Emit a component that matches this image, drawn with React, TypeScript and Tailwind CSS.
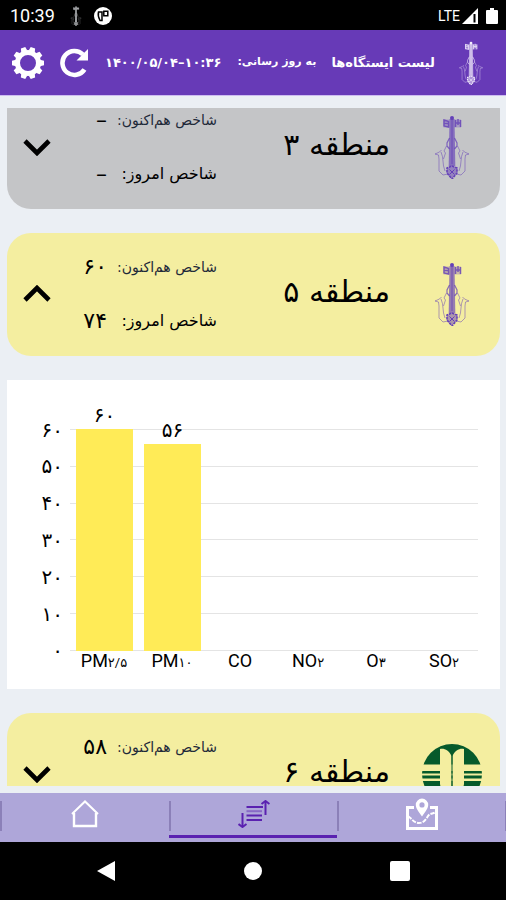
import React, { useState } from "react";
import clsx from "clsx";

type Station = {
  name: string;
  now: string;
  today?: string;
  tone: "none" | "moderate";
  logo: "tehran" | "doe";
};

const stations: Station[] = [
  { name: "منطقه ۳", now: "–", today: "–", tone: "none", logo: "tehran" },
  { name: "منطقه ۵", now: "۶۰", today: "۷۴", tone: "moderate", logo: "tehran" },
  { name: "منطقه ۶", now: "۵۸", tone: "moderate", logo: "doe" },
];

const pollutants = [
  { label: "PM", sub: "۲/۵", value: 60, text: "۶۰" },
  { label: "PM", sub: "۱۰", value: 56, text: "۵۶" },
  { label: "CO", sub: "", value: 0, text: "" },
  { label: "NO", sub: "۲", value: 0, text: "" },
  { label: "O", sub: "۳", value: 0, text: "" },
  { label: "SO", sub: "۲", value: 0, text: "" },
];

const ticks = ["۶۰", "۵۰", "۴۰", "۳۰", "۲۰", "۱۰", "۰"];
const maxValue = 60;

const TehranLogo = ({ className }: { className?: string }) => (
  <svg viewBox="0 0 36 64" fill="none" stroke="currentColor" className={className}>
    <path d="M15.500 4h5l.8 47h-6.600z" fill="currentColor" fillOpacity="0.65" stroke="none" />
    <path d="M18 3v46" strokeWidth="1.200" strokeOpacity="0.6" />
    <circle cx="18" cy="3" r="2" fill="currentColor" stroke="none" />
    <path d="M9.500 4.500h6v8h-6zM20.500 4.500h6.500v8h-6.500z" fill="currentColor" fillOpacity="0.3" stroke="none" />
    <path d="M10 5l4.500 1.500v5.500l-4.500-1zM10 8.500h5M26.500 5v7M24 4v6M21.500 5v7M21 8h6" strokeWidth="1.500" strokeOpacity="0.8" />
    <path d="M15.500 23l-2.500 5v3l2.500 3M20.500 23l2.500 5v3l-2.500 3" strokeWidth="1.200" strokeOpacity="0.75" />
    <path
      d="M12.500 31l-2.500 5 1.500 2-2 6M7.500 35l-2 2-4.500 2 3.500 1 .5 4v12l4 4 5-1M23.500 31l2.500 5-1.500 2 2 6M28.500 35l2 2 4.500 2-3.500 1-.5 4v12l-4 4-5-1M7 37c3 6 1 12 4 19M29 37c-3 6-1 12-4 19"
      strokeWidth="1"
      strokeOpacity="0.5"
    />
    <path d="M18 51l5 2v5l-5 6-5-6v-5z" fill="currentColor" fillOpacity="0.5" strokeWidth="1.600" strokeDasharray="2.500 .8" />
    <path d="M15.500 54.500l5 5M20.500 54.500l-5 5" strokeWidth="1" />
  </svg>
);

const DoeLogo = ({ className }: { className?: string }) => (
  <svg viewBox="0 0 60 60" className={className}>
    <circle cx="30" cy="30" r="30" fill="#065a2b" />
    <g fill="#f4eea0">
      <path d="M0 20.500h60v6.500H0zM0 29.500h60v2H0zM0 34.500h60v2.500H0z" />
      <path d="M18 5C22 4 27 6 29.500 12V60H22L18 40zM42 5C38 4 33 6 30.500 12V60H38L42 40z" />
    </g>
    <path d="M29.500 11h1v49h-1z" fill="#065a2b" />
  </svg>
);

const teeth = [18, 54, 90, 126, 162, 198, 234, 270, 306, 342];

const GearIcon = () => (
  <svg viewBox="-16 -16 32 32" className="size-8">
    <circle r="10.500" fill="none" stroke="currentColor" strokeWidth="5" />
    {teeth.map((angle) => (
      <path key={angle} d="M-3.200-12L-2.300-16H2.300L3.200-12z" fill="currentColor" transform={`rotate(${angle})`} />
    ))}
  </svg>
);

const ReloadIcon = () => (
  <svg viewBox="0 0 30 30" className="size-[30px]">
    <path d="M25.500 21.500A12 12 0 1 1 24 6.500" fill="none" stroke="currentColor" strokeWidth="4.600" />
    <path d="M29 1V12.500H17.500z" fill="currentColor" />
  </svg>
);

const ChevronIcon = ({ open }: { open: boolean }) => (
  <svg viewBox="0 0 28 18" className={clsx("w-7", open && "rotate-180")}>
    <path d="M2 3l12 12L26 3" fill="none" stroke="black" strokeWidth="4.600" />
  </svg>
);

const HomeIcon = () => (
  <svg viewBox="0 0 28 28" fill="none" stroke="white" strokeWidth="2" className="size-7">
    <path d="M1 14L14 1.500 27 14" />
    <path d="M3 13V26H25V13" strokeWidth="2.400" />
  </svg>
);

const SortListIcon = () => (
  <svg viewBox="0 0 32 28" fill="none" stroke="#5a21b0" strokeWidth="2" className="w-8">
    <path d="M8.500 7H25M8.500 15.500H24M8.500 20H24" />
    <path d="M8.500 11.200H24" strokeOpacity="0.45" />
    <path d="M4.500 13V26M27.500 15V2" />
    <path d="M.5 24l4 3 4-3M23.500 4l4-3 4 3" />
  </svg>
);

const MapIcon = () => (
  <svg viewBox="0 0 32 32" className="size-8">
    <path d="M8 9.500H1.500V30.500H30.500V9.500H24" fill="none" stroke="white" strokeWidth="3" />
    <path d="M2 18C6 21 8 25 13 25S20 21 22 18 27 16 30 14" fill="none" stroke="white" strokeWidth="2" strokeDasharray="4.500 1.200" />
    <path fillRule="evenodd" d="M16 18.500C12 13 9.800 10 9.800 6.800a6.200 6.200 0 0 1 12.400 0C22.200 10 20 13 16 18.500zM16 4.300a2.600 2.600 0 1 0 0 5.200 2.600 2.600 0 0 0 0-5.200z" fill="white" />
  </svg>
);

const StatusBar = () => (
  <div className="flex h-[30px] shrink-0 items-center bg-black pt-0.5 pr-2 pl-2.5 font-['Roboto',sans-serif] text-white">
    <span className="w-[60px] text-lg">10:39</span>
    <TehranLogo className="h-5 w-3 text-gray-200" />
    <svg viewBox="0 0 18 18" className="ml-3 size-[18px]">
      <circle cx="9" cy="9" r="9" fill="white" />
      <path d="M4.500 5h3.500v8.500H6Q3.500 9 4.500 5z" fill="none" stroke="black" strokeWidth="1.500" />
      <path d="M9.800 4.300h4v4.500h-4z" fill="none" stroke="black" strokeWidth="1.500" />
    </svg>
    <span className="ml-auto text-sm">LTE</span>
    <svg viewBox="0 0 16 16" className="ml-0.5 size-4">
      <path d="M0 16L16 0V16z" fill="white" />
      <path d="M12.500 6V14.500" stroke="black" strokeWidth="2" />
    </svg>
    <svg viewBox="0 0 12 16" className="ml-2 h-4 w-3">
      <path d="M1 2h3V0h4v2h3q1 0 1 1v12q0 1-1 1H1q-1 0-1-1V3q0-1 1-1z" fill="white" />
    </svg>
  </div>
);

const Header = () => (
  <header dir="rtl" className="flex h-[66px] shrink-0 items-center border-b border-[#cdbcf0] bg-[#673ab7] pr-[22px] pl-3 text-[13px] font-bold text-white">
    <TehranLogo className="h-11 w-[26px] shrink-0 text-[#f3eefc]" />
    <h1 className="mr-[23px] whitespace-nowrap">لیست ایستگاه‌ها</h1>
    <span className="mr-auto text-[11px] whitespace-nowrap">به روز رسانی:</span>
    <time dir="ltr" className="mr-4 whitespace-nowrap">
      ۱۴۰۰/۰۵/۰۴–۱۰:۳۶
    </time>
    <button type="button" aria-label="بارگذاری دوباره" className="mr-4 shrink-0">
      <ReloadIcon />
    </button>
    <button type="button" aria-label="تنظیمات" className="mr-[15px] shrink-0">
      <GearIcon />
    </button>
  </header>
);

const StationCard = ({ station, open, onToggle }: { station: Station; open: boolean; onToggle: () => void }) => (
  <button
    type="button"
    aria-expanded={open}
    onClick={onToggle}
    className={clsx(
      "grid w-full grid-cols-[96px_1fr_150px_60px] items-center rounded-3xl pt-5 pb-[21px] text-right text-black",
      station.tone === "none" ? "bg-[#c4c5c7]" : "bg-[#f4eea0]"
    )}
  >
    {station.logo === "tehran" ? (
      <TehranLogo className="h-16 w-9 justify-self-center text-[#6440b8]" />
    ) : (
      <DoeLogo className="size-[60px] justify-self-center" />
    )}
    <span className="pr-3.5 pb-1 text-3xl leading-6 whitespace-nowrap">{station.name}</span>
    <span className="flex flex-col gap-[26px]">
      <span className="flex h-7 items-center">
        <span className="w-[100px] text-sm whitespace-nowrap text-gray-800">شاخص هم‌اکنون:</span>
        <span className="pr-2.5 text-[22px] leading-5">{station.now}</span>
      </span>
      <span className="flex h-7 items-center">
        {station.today && (
          <>
            <span className="w-[100px] text-base whitespace-nowrap">شاخص امروز:</span>
            <span className="pr-2.5 text-[22px] leading-5">{station.today}</span>
          </>
        )}
      </span>
    </span>
    <span className="flex justify-center">
      <ChevronIcon open={open} />
    </span>
  </button>
);

const PollutantChart = () => (
  <section dir="ltr" className="bg-white pt-[49px] pr-[22px] pb-4 text-black">
    <div className="flex">
      <div className="flex h-[222px] w-14 flex-col justify-between text-xl">
        {ticks.map((tick) => (
          <span key={tick} className="flex h-px items-center justify-end">
            {tick}
          </span>
        ))}
      </div>
      <div className="ml-[7px] grid h-[222px] flex-1">
        <div className="col-start-1 row-start-1 flex flex-col justify-between">
          {ticks.map((tick) => (
            <div key={tick} className="h-px bg-[#e4e4e4]" />
          ))}
        </div>
        <div className="col-start-1 row-start-1 grid grid-cols-6">
          {pollutants.map((p) => (
            <div key={p.label + p.sub} className="flex h-[222px] flex-col justify-end pr-[5px] pl-1.5">
              <div className="bg-[#ffeb57]" style={{ height: `${(p.value / maxValue) * 100}%` }}>
                <span className="-mt-[26px] block h-[26px] text-center text-xl leading-6">{p.text}</span>
              </div>
            </div>
          ))}
        </div>
      </div>
    </div>
    <div className="ml-[63px] grid grid-cols-6 font-['Roboto','DejaVu_Sans',sans-serif] text-lg leading-5">
      {pollutants.map((p) => (
        <span key={p.label + p.sub} className="text-center whitespace-nowrap">
          {p.label}
          <span className="text-[13px]">{p.sub}</span>
        </span>
      ))}
    </div>
  </section>
);

const tabs = [
  { id: "home", label: "خانه", icon: <HomeIcon /> },
  { id: "list", label: "لیست", icon: <SortListIcon /> },
  { id: "map", label: "نقشه", icon: <MapIcon /> },
];

const TabBar = () => {
  const [active, setActive] = useState("list");

  return (
    <nav className="grid h-[49px] shrink-0 grid-cols-3 bg-[#aea6d9]">
      {tabs.map((tab) => (
        <button key={tab.id} type="button" aria-label={tab.label} onClick={() => setActive(tab.id)} className="group flex flex-col pt-2">
          <span className="flex h-[30px] w-full items-center justify-center border-l-2 border-[#8b80b8] group-last:border-r">
            <span className="-mt-1">{tab.icon}</span>
          </span>
          <span className={clsx("mt-1 h-[3px] w-full", active === tab.id && "bg-[#5a21b0]")} />
        </button>
      ))}
    </nav>
  );
};

const SystemBar = () => (
  <div className="flex h-[58px] shrink-0 items-center justify-between bg-black px-24 text-white">
    <button type="button" aria-label="Back">
      <svg viewBox="0 0 20 22" className="w-5">
        <path d="M1 11L19 1V21z" fill="white" />
      </svg>
    </button>
    <button type="button" aria-label="Home" className="size-[18px] rounded-full bg-white" />
    <button type="button" aria-label="Recent apps" className="size-5 rounded-xs bg-white" />
  </div>
);

export default function App() {
  const [openStation, setOpenStation] = useState<string | null>("منطقه ۵");

  return (
    <div className="flex h-screen flex-col bg-[#ebeff4] font-['DejaVu_Sans',sans-serif]">
      <StatusBar />
      <Header />
      <main className="min-h-0 flex-1 pt-3 pr-1.5 pb-[7px] pl-[7px]">
        <div dir="rtl" className="h-full overflow-y-auto [scrollbar-width:none]">
          <div className="-mt-[22px] flex flex-col gap-6">
            {stations.map((station) => (
              <React.Fragment key={station.name}>
                <StationCard
                  station={station}
                  open={openStation === station.name}
                  onToggle={() => setOpenStation(openStation === station.name ? null : station.name)}
                />
                {openStation === station.name && <PollutantChart />}
              </React.Fragment>
            ))}
          </div>
        </div>
      </main>
      <TabBar />
      <SystemBar />
    </div>
  );
}
